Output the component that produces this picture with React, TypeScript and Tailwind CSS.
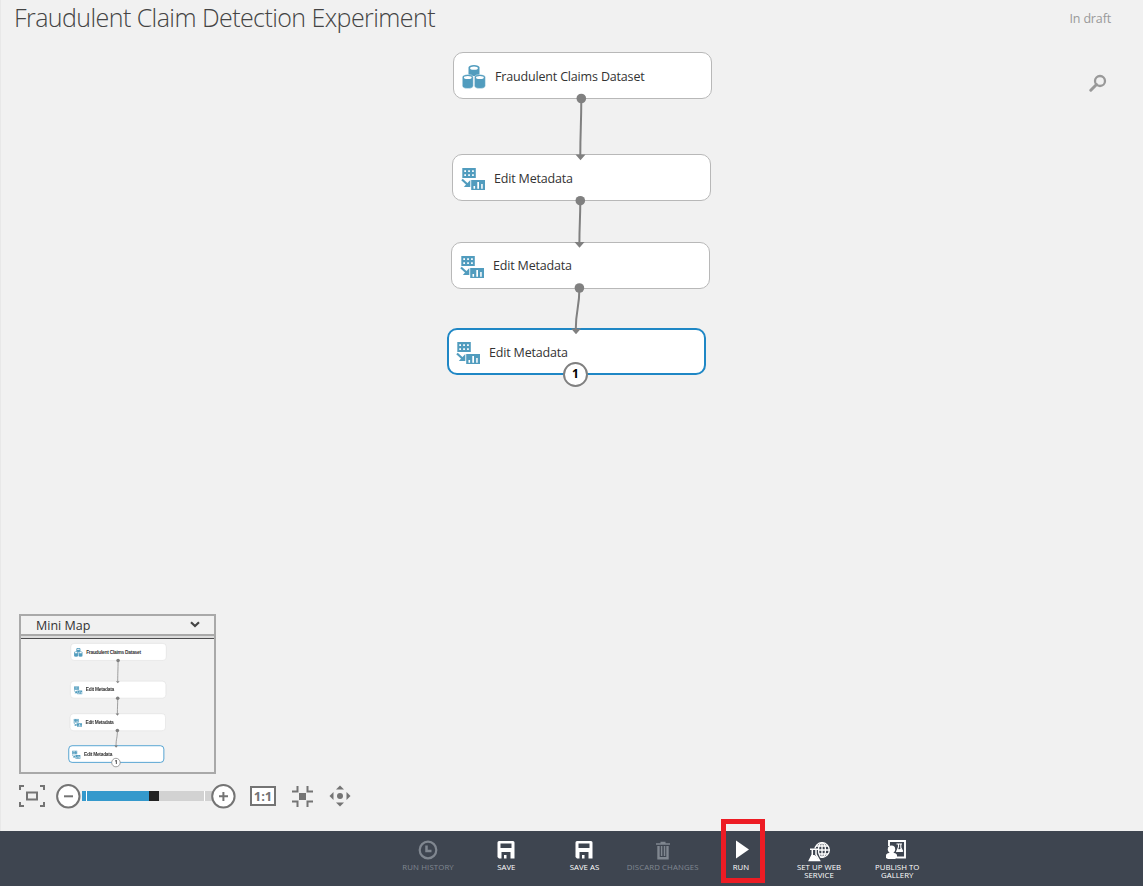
import React from "react";

type NodeInfo = { x: number; y: number; label: string; kind: "data" | "meta"; selected?: boolean };

const nodes: NodeInfo[] = [
  { x: 453, y: 52, label: "Fraudulent Claims Dataset", kind: "data" },
  { x: 452, y: 154, label: "Edit Metadata", kind: "meta" },
  { x: 451, y: 241.5, label: "Edit Metadata", kind: "meta" },
  { x: 447, y: 328, label: "Edit Metadata", kind: "meta", selected: true },
];

function DatasetIcon() {
  const can = (x: number, y: number) => (
    <g transform={`translate(${x} ${y})`}>
      <path d="M0 2.6C0 1 2.5 0 5.5 0S11 1 11 2.6V11.4C11 13 8.500 14 5.500 14S0 13 0 11.400Z" fill="#519cbe" stroke="#fff" strokeWidth="0.400" />
      <ellipse cx="5.500" cy="3" rx="3.900" ry="1.500" fill="#fff" />
    </g>
  );
  return (
    <svg width="24" height="25" viewBox="0 0 24 25" className="block">
      <path d="M6.500 2.600C6.500 1 9 0 12 0s5.500 1 5.500 2.600V11h-11Z" fill="#519cbe" />
      <ellipse cx="12" cy="3.200" rx="3.900" ry="1.600" fill="#fff" />
      {can(0.3, 9.5)}
      {can(12.4, 9.5)}
    </svg>
  );
}

function MetadataIcon() {
  return (
    <svg width="24" height="23" viewBox="0 0 24 23" className="block">
      <path d="M1.300 0h13.500v10H1.300z" fill="#519cbe" />
      <path d="M3.300 2.200h1.700v1.700H3.300zM7.200 2.200h1.700v1.700H7.200zM11.100 2.200h1.700v1.700h-1.700zM3.300 6.200h1.700v1.700H3.300zM7.200 6.200h1.700v1.700H7.200zM11.100 6.200h1.700v1.700h-1.700z" fill="#fff" />
      <path d="M1 11.500l6 5.500" stroke="#519cbe" strokeWidth="2.200" />
      <path d="M9.300 12v7H2.800Z" fill="#519cbe" />
      <path d="M10.200 12H24v10H10.200z" fill="#519cbe" />
      <path d="M12.500 18h1.600v2.800h-1.600zM16.300 14H18v6.800h-1.700zM20.200 16h1.500v4.800h-1.500z" fill="#fff" />
    </svg>
  );
}

function Graph({ mini = false }: { mini?: boolean }) {
  return (
    <>
      {nodes.map((n) => (
        <div
          key={n.y}
          style={{ left: n.x, top: n.y }}
          className={`absolute flex h-[47px] w-[259px] items-center rounded-[10px] bg-white ${
            n.selected ? "border-2 border-[#1f87c5] pl-[7px]" : "border pl-[8px] " + (mini ? "border-[#d0d0d0]" : "border-[#b8b8b8]")
          }`}
        >
          <div className={n.kind === "data" ? "mt-[3px] w-[33px]" : "mt-[4px] w-[33px]"}>
            {n.kind === "data" ? <DatasetIcon /> : <MetadataIcon />}
          </div>
          <span
            className={
              mini
                ? "whitespace-nowrap font-['Liberation_Sans'] text-[13px] font-bold tracking-[-0.65px] text-[#333]"
                : "mt-[3px] whitespace-nowrap text-[12.5px] tracking-[-0.17px] text-[#333]"
            }
          >
            {n.label}
          </span>
        </div>
      ))}
      <svg width="720" height="400" className="absolute left-0 top-0">
        <g stroke="#808080" strokeWidth="2" fill="none">
          <path d="M581.300 99C581.300 125 580.300 130 580.300 155" />
          <path d="M580.300 201C580.300 220 579.400 224 579.400 243" />
          <path d="M579.400 288C579.400 309 575.800 309 575.800 329" />
        </g>
        <g fill="#808080">
          <circle cx="581.300" cy="98.500" r="4.800" />
          <circle cx="580.300" cy="200.700" r="4.800" />
          <circle cx="579.400" cy="288" r="4.800" />
          <path d="M575.500 154.500h10l-5 5.800zM574.500 242h10l-5 5.800zM571 328.500h10l-5 5.800z" />
        </g>
      </svg>
      <div className="absolute left-[563px] top-[362px] flex h-[25px] w-[25px] items-center justify-center rounded-full border-2 border-[#808080] bg-white pb-px text-[12px] font-bold text-black">
        1
      </div>
    </>
  );
}

function ToolItem({ label, dim = false, children }: { label: string; dim?: boolean; children: React.ReactNode }) {
  return (
    <div className={`flex w-[78.200px] shrink-0 flex-col items-center ${dim ? "text-[#808790]" : "text-white"}`}>
      <div className="flex h-[32px] items-end">{children}</div>
      <div className={`whitespace-pre text-center text-[7.800px] leading-[8px] ${dim ? "tracking-[0.120px]" : "font-medium tracking-[0.020px]"}`}>{label}</div>
    </div>
  );
}

function SaveIcon() {
  return (
    <svg width="18" height="24" viewBox="0 0 18 24">
      <path fillRule="evenodd" d="M2 2H16Q17.500 2 17.500 3.500V19.500H2L0.500 18V3.500Q.5 2 2 2ZM3.500 4.500V9H14.500V4.500ZM4.500 13V19.500H7V16H9.500V19.500H13.500V13Z" fill="currentColor" />
    </svg>
  );
}

export default function App() {
  return (
    <div className="flex h-[886px] w-[1143px] flex-col overflow-hidden bg-[#f1f1f1] font-['Open_Sans',sans-serif]">
      <main className="relative flex h-[831px] flex-col justify-between border-l border-[#e8e8e8]">
        <div className="absolute -left-px top-0"><Graph /></div>
        <header className="flex items-start justify-between pl-[13px] pr-[32px]">
          <h1 className="whitespace-nowrap text-[25px] font-light leading-[35px] tracking-[-0.570px] text-[#444]">
            Fraudulent Claim Detection Experiment
          </h1>
          <div className="flex flex-col items-end">
            <span className="text-[12.500px] leading-[37px] tracking-[-0.150px] text-[#999]">In draft</span>
            <svg width="18" height="18" viewBox="0 0 18 18" className="mr-[4px] mt-[37px]" fill="none" stroke="#999">
              <circle cx="11" cy="7" r="5" strokeWidth="2.300" />
              <path d="M7.500 10.500L1.800 16.200" strokeWidth="3" strokeLinecap="round" />
            </svg>
          </div>
        </header>

        <section className="flex flex-col pb-[22px] pl-[18px]">
          <div className="h-[160px] w-[197px] border-2 border-[#a9a9a9]">
            <div className="flex h-[20px] items-center justify-between border-b-2 border-[#a9a9a9] pl-[15px] pr-[14px] text-[12.500px] text-[#333]">
              <span className="mt-[2px]">Mini Map</span>
              <svg width="10" height="7" viewBox="0 0 10 7" className="-mt-px" fill="none" stroke="#444" strokeWidth="2.200"><path d="M1 1.200l4 3.800 4-3.800" /></svg>
            </div>
            <div className="h-[2px] bg-[#dcdcdc]" />
            <div className="relative h-[134px] border-t border-[#4b4b4d]">
              <div className="absolute left-[-118.200px] top-[-15px] h-[400px] w-[720px] origin-top-left scale-[0.370]"><Graph mini /></div>
            </div>
          </div>

          <div className="mt-[9px] flex h-[26px] items-center">
            <svg width="26" height="22" viewBox="0 0 26 22" fill="none" stroke="#747474" strokeWidth="2">
              <path d="M1 5V1h4M21 1h4v4M25 17v4h-4M5 21H1v-4M8 7.500h10v7H8z" />
            </svg>
            <div className="ml-[11px] flex items-center">
              <svg width="25" height="25" viewBox="0 0 25 25" className="z-10 shrink-0">
                <circle cx="12.300" cy="12.300" r="11.200" fill="#fff" stroke="#747474" strokeWidth="2" />
                <path d="M8 12.300h9" stroke="#747474" strokeWidth="2" />
              </svg>
              <div className="ml-[1px] flex h-[10px] w-[130px]">
                <div className="w-[4px] bg-[#3499cc]" />
                <div className="w-px bg-white" />
                <div className="w-[62px] bg-[#3499cc]" />
                <div className="w-[10px] bg-[#222]" />
                <div className="w-[45px] bg-[#d2d2d2]" />
                <div className="w-px bg-white" />
                <div className="w-[7px] bg-[#d2d2d2]" />
              </div>
              <svg width="25" height="25" viewBox="0 0 25 25" className="-ml-px z-10 shrink-0">
                <circle cx="12.400" cy="12.300" r="11.200" fill="#fff" stroke="#747474" strokeWidth="2" />
                <path d="M8 12.300h9M12.400 8v9" stroke="#747474" strokeWidth="2" />
              </svg>
            </div>
            <div className="ml-[14px] flex h-[20px] w-[26px] items-center justify-center border-2 border-[#747474] bg-white text-[13px] font-bold leading-none text-[#747474]">1:1</div>
            <svg width="21" height="21" viewBox="0 0 21 21" className="ml-[16px]" fill="none" stroke="#747474" strokeWidth="2">
              <path d="M5.500 0v5.500H0M15.500 0v5.500H21M5.500 21v-5.500H0M15.500 21v-5.500H21" />
              <path d="M7 7h7v7H7z" fill="#747474" stroke="none" />
            </svg>
            <svg width="22" height="22" viewBox="0 0 22 22" className="ml-[15.500px]" fill="#747474">
              <circle cx="11" cy="11" r="3" />
              <path d="M11 0.500l4 4H7zM11 21.500l4-4H7zM.5 11l4-4v8zM21.500 11l-4-4v8z" />
            </svg>
          </div>
        </section>
      </main>

      <footer className="relative flex h-[55px] bg-[#3e4550] pl-[389px]">
        <ToolItem label="RUN HISTORY" dim>
          <svg width="20" height="24" viewBox="0 0 20 24" fill="none" stroke="currentColor" strokeWidth="2.200">
            <circle cx="10" cy="11" r="8.300" /><path d="M8.500 6.500V12H13.500" strokeWidth="2.500" />
          </svg>
        </ToolItem>
        <ToolItem label="SAVE"><SaveIcon /></ToolItem>
        <ToolItem label="SAVE AS"><SaveIcon /></ToolItem>
        <ToolItem label="DISCARD CHANGES" dim>
          <svg width="14" height="24" viewBox="0 0 14 24" fill="none" stroke="currentColor" className="ml-px">
            <path d="M0 5h14M4.500 3.500h5" strokeWidth="1.700" />
            <path d="M2.500 7v12.300h9V7" strokeWidth="2.400" /><path d="M5.600 7v10M8.500 7v10" strokeWidth="1.500" />
          </svg>
        </ToolItem>
        <ToolItem label="RUN">
          <svg width="13" height="24" viewBox="0 0 13 24" className="ml-[3px]"><path d="M0 1.500L13 10.500 0 19.500Z" fill="currentColor" /></svg>
        </ToolItem>
        <ToolItem label={"SET UP WEB\nSERVICE"}>
          <svg width="22" height="24" viewBox="0 0 22 24" fill="none" stroke="currentColor">
            <g strokeWidth="1.300">
              <circle cx="14" cy="11" r="7.300" /><ellipse cx="14" cy="11" rx="3.500" ry="7.300" />
              <path d="M14 3.500v15M6.500 11h15M8 7h12M8 15h12" />
            </g>
            <path d="M1.500 9.500h8.500V14l3.500 8.500H-.5L3 14Z" fill="#3e4550" stroke="none" />
            <path d="M2 10.300h8M4.300 10.500v5L1.300 21.500H11.500L8 15.500v-5" strokeWidth="1.500" />
            <path d="M4 16h2.500l2 1.500 2.500 4h-9.500z" fill="currentColor" stroke="none" />
          </svg>
        </ToolItem>
        <ToolItem label={"PUBLISH TO\nGALLERY"}>
          <svg width="22" height="24" viewBox="0 0 22 24" fill="none" stroke="currentColor" className="mr-[2px]">
            <path d="M4 7V2H20v16.500h-8.500" strokeWidth="1.900" />
            <path d="M11.500 5h5.500M13.500 5v3l-2 5M15.800 5v3.500l2 4" strokeWidth="1.100" />
            <path d="M12.500 10l2 .3 1.500-1 2 3.700h-6.500z" fill="currentColor" stroke="none" />
            <circle cx="6.500" cy="10.200" r="3.700" fill="currentColor" stroke="none" />
            <path d="M1 19v-2.500q0-2 3-2.500l1-1h3l1 1q3 .5 3 2.500V19l-2 1h-7Z" fill="currentColor" stroke="none" />
          </svg>
        </ToolItem>
        <div className="absolute left-[721px] top-[-12px] h-[64px] w-[44px] border-[5px] border-[#ed1c24]" />
      </footer>
    </div>
  );
}
